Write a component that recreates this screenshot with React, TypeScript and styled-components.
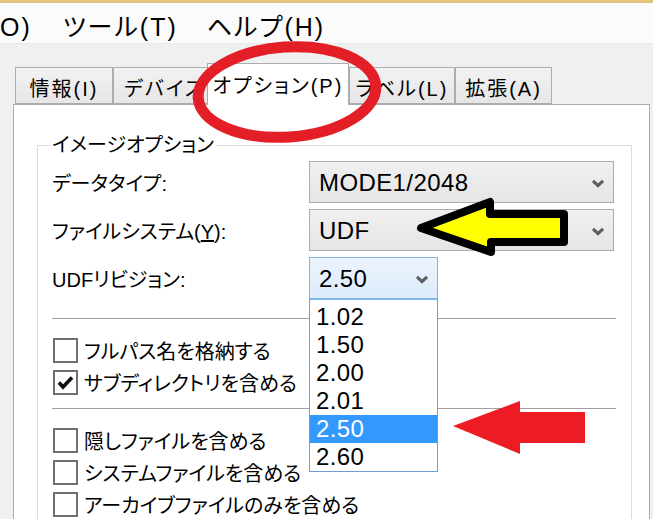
import styled, { createGlobalStyle } from "styled-components";

const GlobalStyle = createGlobalStyle`
  html, body {
    margin: 0;
    padding: 0;
    background: #f0f0f0;
    overflow: hidden;
  }
  * {
    box-sizing: border-box;
  }
`;

const uiFont = `"Liberation Sans", "Noto Sans CJK JP", sans-serif`;

const revisions = ["1.02", "1.50", "2.00", "2.01", "2.50", "2.60"];
const selectedRevision = "2.50";

const Screen = styled.div`
  position: relative;
  width: 653px;
  height: 519px;
  overflow: hidden;
  font-family: ${uiFont};
  font-feature-settings: "palt";
  color: #000;
  background: #f0f0f0;
`;

const TopStripe = styled.div`
  height: 3px;
  background: #e3c47e;
`;

const MenuBar = styled.div`
  display: flex;
  align-items: center;
  height: 41px;
  padding-top: 8px;
  background: #fbfbfb;
  border-bottom: 1px solid #e9e9e9;
  font-size: 25px;
  letter-spacing: 2px;
`;

const MenuItem = styled.span<{ $gap?: number }>`
  margin-left: ${(p) => p.$gap ?? 0}px;
  white-space: nowrap;
  line-height: 30px;
`;

const Content = styled.div`
  padding: 19px 3px 0 13px;
`;

const TabStrip = styled.div`
  display: flex;
  align-items: flex-end;
  height: 42px;
  padding-left: 2px;
  position: relative;
  z-index: 2;
`;

const Tab = styled.div<{ $w: number; $active?: boolean }>`
  width: ${(p) => p.$w}px;
  height: ${(p) => (p.$active ? 42 : 37)}px;
  margin-bottom: ${(p) => (p.$active ? 0 : 1)}px;
  margin-left: ${(p) => (p.$active ? -1 : 0)}px;
  border: 1px solid #acacac;
  border-bottom: ${(p) => (p.$active ? "none" : "1px solid #acacac")};
  background: ${(p) =>
    p.$active ? "#ffffff" : "linear-gradient(#f2f2f2, #e6e6e6)"};
  display: flex;
  align-items: center;
  justify-content: center;
  padding-top: ${(p) => (p.$active ? 0 : 3)}px;
  font-size: 20px;
  letter-spacing: 2px;
  white-space: nowrap;
  position: relative;
  z-index: ${(p) => (p.$active ? 2 : 1)};
`;

const TabLabel = styled.span<{ $indent?: number }>`
  margin-left: ${(p) => p.$indent ?? 0}px;
`;

const Panel = styled.div`
  margin-top: -1px;
  height: 430px;
  background: #ffffff;
  border: 1px solid #acacac;
  padding: 28px 17px 0 23px;
`;

const GroupBox = styled.fieldset`
  margin: 0;
  min-width: 0;
  height: 420px;
  border: 1px solid #dcdcdc;
  padding: 4px 15px 0 14px;
`;

const GroupTitle = styled.legend`
  font-size: 20px;
  line-height: 24px;
  padding: 0 2px;
  margin-left: -2px;
`;

const FormGrid = styled.div`
  display: grid;
  grid-template-columns: 257px 305px;
  row-gap: 6px;
  align-items: center;
`;

const FieldLabel = styled.div`
  font-size: 20px;
  white-space: nowrap;
`;

const Combo = styled.div<{ $w: number; $open?: boolean }>`
  position: relative;
  width: ${(p) => p.$w}px;
  height: ${(p) => (p.$open ? 43 : 42)}px;
  display: flex;
  align-items: center;
  justify-content: space-between;
  padding: 2px 8px 0 9px;
  border: 1px solid ${(p) => (p.$open ? "#7eb4ea" : "#acacac")};
  border-bottom-width: ${(p) => (p.$open ? 2 : 1)}px;
  background: ${(p) =>
    p.$open
      ? "linear-gradient(#ecf4fc, #dcecfc)"
      : "linear-gradient(#f0f0f0, #e5e5e5)"};
  font-size: 24px;
  letter-spacing: 0.4px;
`;

const Chevron = () => (
  <svg width="14" height="9" viewBox="0 0 14 9">
    <path
      d="M2 1.8 L7 6.6 L12 1.8"
      fill="none"
      stroke="#5e5e5e"
      strokeWidth="3.2"
    />
  </svg>
);

const DropList = styled.ul`
  position: absolute;
  left: -1px;
  top: calc(100% + 2px);
  width: 129px;
  margin: 0;
  padding: 3px 0 0;
  list-style: none;
  background: #ffffff;
  border: 1px solid #6f9ed0;
  border-top: none;
  z-index: 5;
`;

const DropItem = styled.li<{ $selected?: boolean }>`
  height: 28px;
  line-height: 28px;
  padding-left: 6px;
  font-size: 24px;
  letter-spacing: 0.4px;
  background: ${(p) => (p.$selected ? "#3399ff" : "transparent")};
  color: ${(p) => (p.$selected ? "#ffffff" : "#000000")};
`;

const Separator = styled.div<{ $top: number }>`
  margin-top: ${(p) => p.$top}px;
  height: 1px;
  background: #a0a0a0;
`;

const CheckList = styled.div<{ $top: number }>`
  margin-top: ${(p) => p.$top}px;
  display: flex;
  flex-direction: column;
`;

const CheckRow = styled.label`
  display: flex;
  align-items: center;
  gap: 6px;
  height: 32px;
  padding-left: 1px;
  font-size: 20px;
  white-space: nowrap;
`;

const Box = styled.span`
  width: 25px;
  height: 25px;
  flex: none;
  border: 2px solid #6f6f6f;
  background: #ffffff;
  display: flex;
  align-items: center;
  justify-content: center;
`;

const Check = () => (
  <svg width="17" height="15" viewBox="0 0 17 15">
    <path
      d="M2 7.5 L6 12 L15 2.5"
      fill="none"
      stroke="#111"
      strokeWidth="3.6"
    />
  </svg>
);

const Annotations = styled.svg`
  position: absolute;
  left: 0;
  top: 0;
  pointer-events: none;
  z-index: 10;
`;

function CheckItem({ text, checked }: { text: string; checked?: boolean }) {
  return (
    <CheckRow>
      <Box>{checked && <Check />}</Box>
      {text}
    </CheckRow>
  );
}

export default function App() {
  return (
    <Screen>
      <GlobalStyle />
      <TopStripe />
      <MenuBar>
        <MenuItem>O)</MenuItem>
        <MenuItem $gap={31}>ツール(T)</MenuItem>
        <MenuItem $gap={29}>ヘルプ(H)</MenuItem>
      </MenuBar>

      <Content>
        <TabStrip>
          <Tab $w={98}>情報(I)</Tab>
          <Tab $w={95}>
            <TabLabel $indent={8}>デバイス</TabLabel>
          </Tab>
          <Tab $w={142} $active>
            オプション(P)
          </Tab>
          <Tab $w={106}>ラベル(L)</Tab>
          <Tab $w={97}>拡張(A)</Tab>
        </TabStrip>

        <Panel>
          <GroupBox>
            <GroupTitle>イメージオプション</GroupTitle>
            <FormGrid>
              <FieldLabel>データタイプ:</FieldLabel>
              <Combo $w={305}>
                MODE1/2048
                <Chevron />
              </Combo>
              <FieldLabel>
                ファイルシステム(<u>Y</u>):
              </FieldLabel>
              <Combo $w={305}>
                UDF
                <Chevron />
              </Combo>
              <FieldLabel>UDFリビジョン:</FieldLabel>
              <Combo $w={129} $open>
                {selectedRevision}
                <Chevron />
                <DropList>
                  {revisions.map((r) => (
                    <DropItem key={r} $selected={r === selectedRevision}>
                      {r}
                    </DropItem>
                  ))}
                </DropList>
              </Combo>
            </FormGrid>

            <Separator $top={18} />
            <CheckList $top={15}>
              <CheckItem text="フルパス名を格納する" />
              <CheckItem text="サブディレクトリを含める" checked />
            </CheckList>
            <Separator $top={10} />
            <CheckList $top={15}>
              <CheckItem text="隠しファイルを含める" />
              <CheckItem text="システムファイルを含める" />
              <CheckItem text="アーカイブファイルのみを含める" />
            </CheckList>
          </GroupBox>
        </Panel>
      </Content>

      <Annotations width="653" height="519" viewBox="0 0 653 519">
        <ellipse
          cx="287"
          cy="92"
          rx="89"
          ry="45"
          transform="rotate(-4 287 92)"
          fill="none"
          stroke="#e31e26"
          strokeWidth="11"
        />
        <polygon
          points="421,228 490,202 490,214 564,214 564,242 491,242 491,252"
          fill="#ffff00"
          stroke="#000"
          strokeWidth="8"
          strokeLinejoin="round"
        />
        <polygon
          points="453,426 520,401 520,412 585,412 585,443 520,443 520,454"
          fill="#ed1c24"
        />
      </Annotations>
    </Screen>
  );
}
